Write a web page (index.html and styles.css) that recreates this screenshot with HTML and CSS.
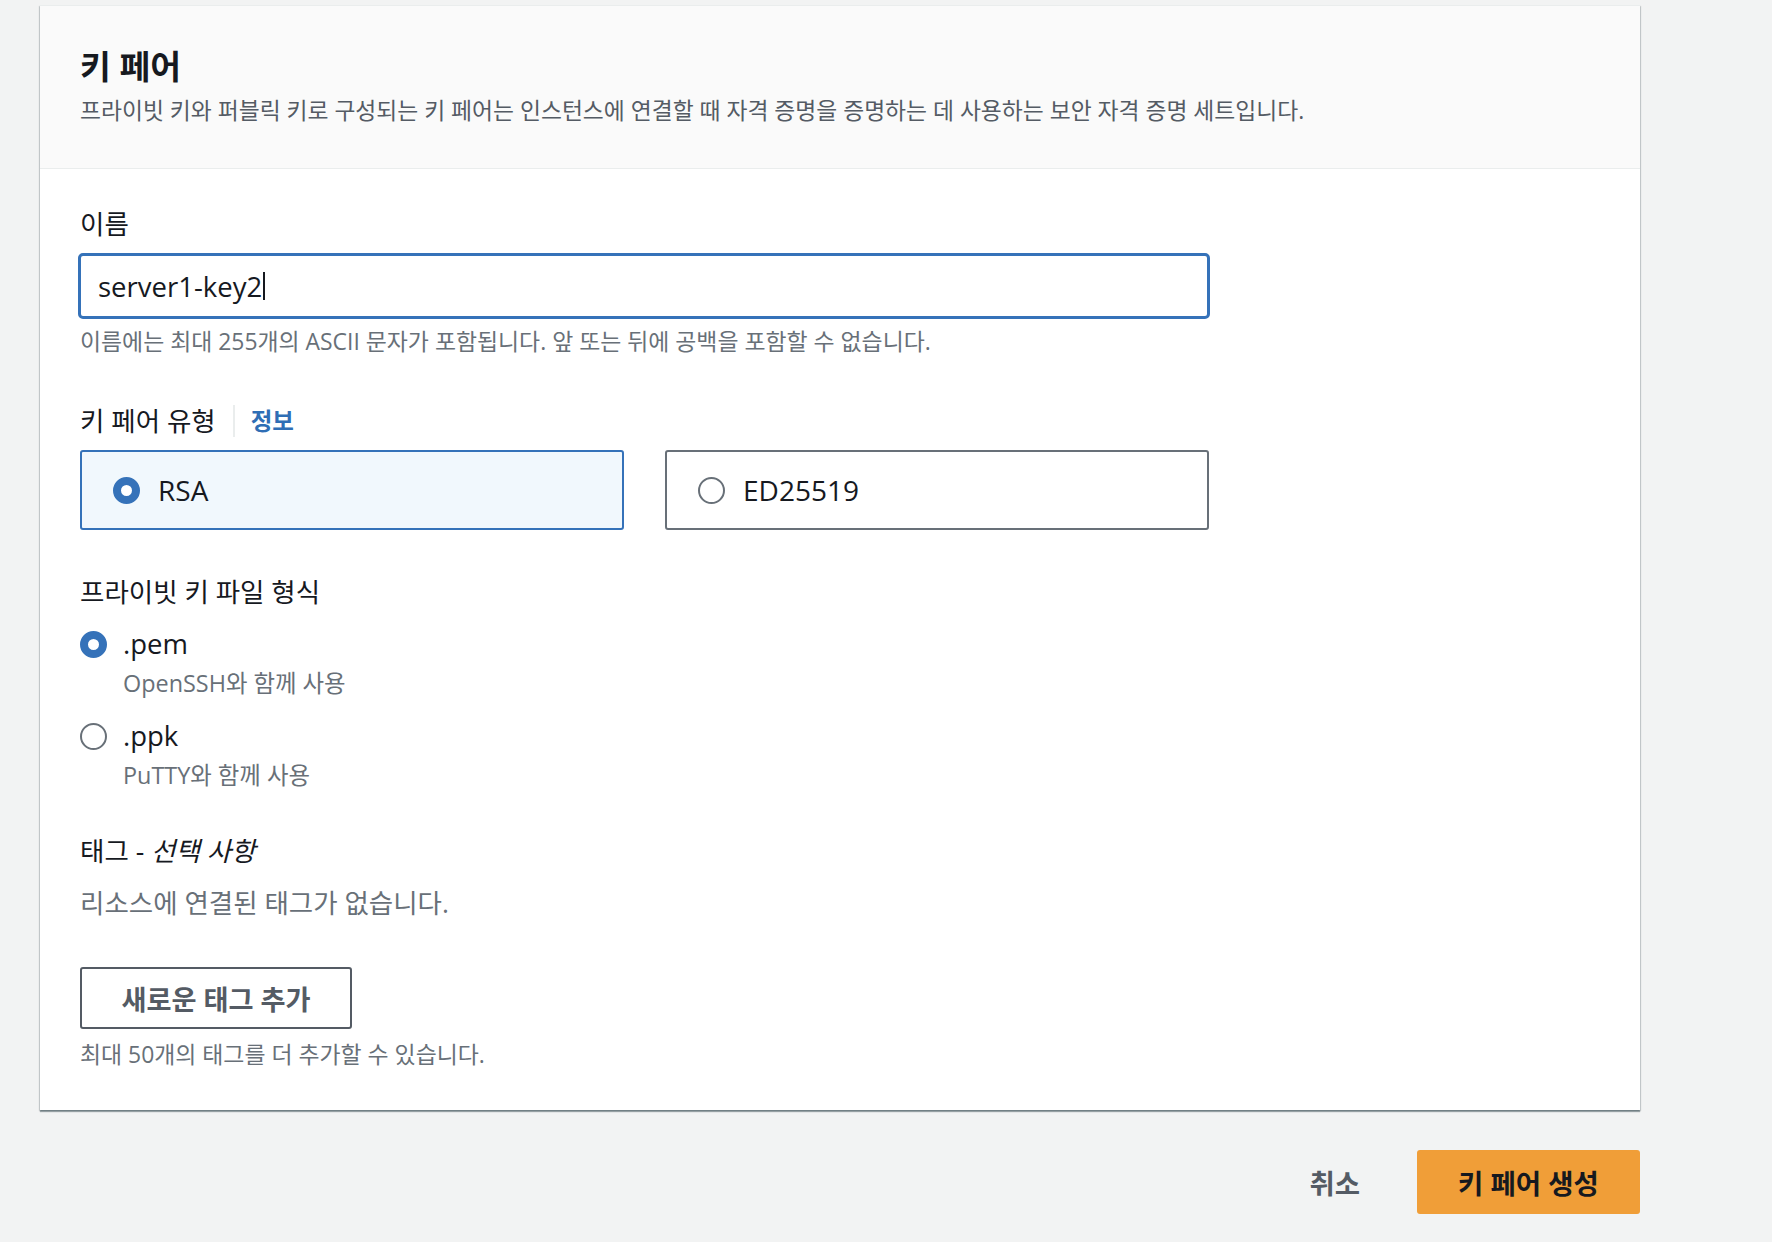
FILE: index.html
```html
<!DOCTYPE html>
<html lang="ko">
<head>
<meta charset="utf-8">
<title>키 페어 생성</title>
<link rel="stylesheet" href="styles.css">
</head>
<body>
<div class="page">
  <section class="card">
    <header class="card-header">
      <h2 class="title">키 페어</h2>
      <p class="desc">프라이빗 키와 퍼블릭 키로 구성되는 키 페어는 인스턴스에 연결할 때 자격 증명을 증명하는 데 사용하는 보안 자격 증명 세트입니다.</p>
    </header>
    <div class="card-body">
      <div class="form">
        <div class="label">이름</div>
        <div class="input"><span class="input-text">server1-key2</span><span class="caret"></span></div>
        <div class="hint">이름에는 최대 255개의 ASCII 문자가 포함됩니다. 앞 또는 뒤에 공백을 포함할 수 없습니다.</div>

        <div class="label label-type">키 페어 유형<span class="sep"></span><span class="info">정보</span></div>
        <div class="tiles">
          <div class="tile tile-selected"><span class="radio radio-on"></span><span class="tile-text">RSA</span></div>
          <div class="tile"><span class="radio"></span><span class="tile-text">ED25519</span></div>
        </div>

        <div class="label label-format">프라이빗 키 파일 형식</div>
        <div class="option option-first">
          <span class="radio radio-on"></span>
          <div class="option-body">
            <div class="option-title">.pem</div>
            <div class="option-sub">OpenSSH와 함께 사용</div>
          </div>
        </div>
        <div class="option">
          <span class="radio"></span>
          <div class="option-body">
            <div class="option-title">.ppk</div>
            <div class="option-sub">PuTTY와 함께 사용</div>
          </div>
        </div>

        <div class="label label-tags">태그 - <em>선택 사항</em></div>
        <div class="empty">리소스에 연결된 태그가 없습니다.</div>
        <div class="add-btn">새로운 태그 추가</div>
        <div class="hint hint-tags">최대 50개의 태그를 더 추가할 수 있습니다.</div>
      </div>
    </div>
  </section>
  <footer class="actions">
    <span class="cancel">취소</span>
    <span class="primary">키 페어 생성</span>
  </footer>
</div>
</body>
</html>
```

FILE: styles.css
```css
* { box-sizing: border-box; }

html, body {
  margin: 0;
  padding: 0;
  background: #f2f3f3;
}

body {
  font-family: "Open Sans", "Noto Sans CJK KR", sans-serif;
  color: #16191f;
}

.page {
  padding: 5px 0 0 40px;
  width: 1640px;
}

.card {
  width: 1600px;
  background: #ffffff;
  border-top: 1px solid #eaeded;
  box-shadow: 0 2px 1px 0 rgba(0, 28, 36, 0.35), 1px 1px 1px 0 rgba(0, 28, 36, 0.15), -1px 1px 1px 0 rgba(0, 28, 36, 0.15);
}

.card-header {
  background: #fafafa;
  border-bottom: 1px solid #eaeded;
  padding: 40px 40px 42px 40px;
}

.title {
  margin: 0;
  font-size: 33.5px;
  line-height: 40px;
  font-weight: 700;
  color: #16191f;
}

.desc {
  margin: 10px 0 0 0;
  font-size: 22.8px;
  line-height: 30px;
  color: #545b64;
}

.card-body {
  padding: 38px 40px 41px 40px;
}

.form {
  width: 1130px;
  display: flex;
  flex-direction: column;
  align-items: flex-start;
}

.label {
  font-size: 26.5px;
  line-height: 34px;
  color: #16191f;
  display: flex;
  align-items: center;
}

.input {
  margin-top: 12px;
  width: 1132px;
  margin-left: -2px;
  height: 66px;
  border: 3px solid #3572b9;
  border-radius: 5px;
  display: flex;
  align-items: center;
  padding-left: 17px;
  font-size: 27.5px;
  color: #16191f;
}

.caret {
  display: inline-block;
  width: 2px;
  height: 28px;
  background: #16191f;
  margin-left: 1px;
}

.hint {
  margin-top: 10px;
  font-size: 22.9px;
  line-height: 26px;
  color: #687078;
}

.label-type {
  margin-top: 49px;
}

.sep {
  display: inline-block;
  width: 2px;
  height: 32px;
  background: #eaeded;
  margin: 0 16px 0 17px;
}

.info {
  font-size: 23.5px;
  font-weight: 700;
  color: #2f6eb5;
}

.tiles {
  margin-top: 12px;
  width: 1130px;
  display: grid;
  grid-template-columns: 544px 544px;
  column-gap: 41px;
}

.tile {
  height: 80px;
  border: 2px solid #687078;
  border-radius: 3px;
  background: #ffffff;
  display: flex;
  align-items: center;
  padding-left: 31px;
}

.tile-selected {
  border-color: #3572b9;
  background: #f1f8fd;
}

.tile-text {
  font-size: 28px;
  margin-left: 18px;
  color: #16191f;
}

.radio {
  display: inline-block;
  flex: none;
  width: 27px;
  height: 27px;
  border-radius: 50%;
  border: 2px solid #687078;
  background: #ffffff;
}

.radio-on {
  border: 8.5px solid #3572b9;
  background: #ffffff;
}

.label-format {
  margin-top: 45px;
}

.option {
  display: flex;
  align-items: flex-start;
  margin-top: 22px;
}

.option-first {
  margin-top: 18px;
}

.option .radio {
  margin-top: 3.5px;
}

.option-body {
  margin-left: 16px;
}

.option-title {
  font-size: 27.5px;
  line-height: 34px;
  color: #16191f;
}

.option-sub {
  margin-top: 8px;
  font-size: 23.4px;
  line-height: 28px;
  color: #687078;
}

.label-tags {
  margin-top: 45px;
}

.label-tags em {
  font-style: italic;
  margin-left: 0.26em;
}

.empty {
  margin-top: 18px;
  font-size: 26.5px;
  line-height: 34px;
  color: #687078;
}

.add-btn {
  margin-top: 47px;
  width: 272px;
  height: 62px;
  border: 2px solid #545b64;
  border-radius: 3px;
  display: flex;
  align-items: center;
  justify-content: center;
  font-size: 27.2px;
  font-weight: 700;
  color: #545b64;
  background: #ffffff;
}

.hint-tags {
  margin-top: 12px;
  line-height: 28px;
}

.actions {
  width: 1600px;
  margin-top: 40px;
  display: flex;
  justify-content: flex-end;
  align-items: center;
}

.cancel {
  font-size: 27.5px;
  font-weight: 700;
  color: #545b64;
  margin-right: 57px;
}

.primary {
  width: 223px;
  height: 64px;
  background: #f09e38;
  border-radius: 3px;
  display: flex;
  align-items: center;
  justify-content: center;
  font-size: 27.5px;
  font-weight: 700;
  color: #16191f;
}
```
